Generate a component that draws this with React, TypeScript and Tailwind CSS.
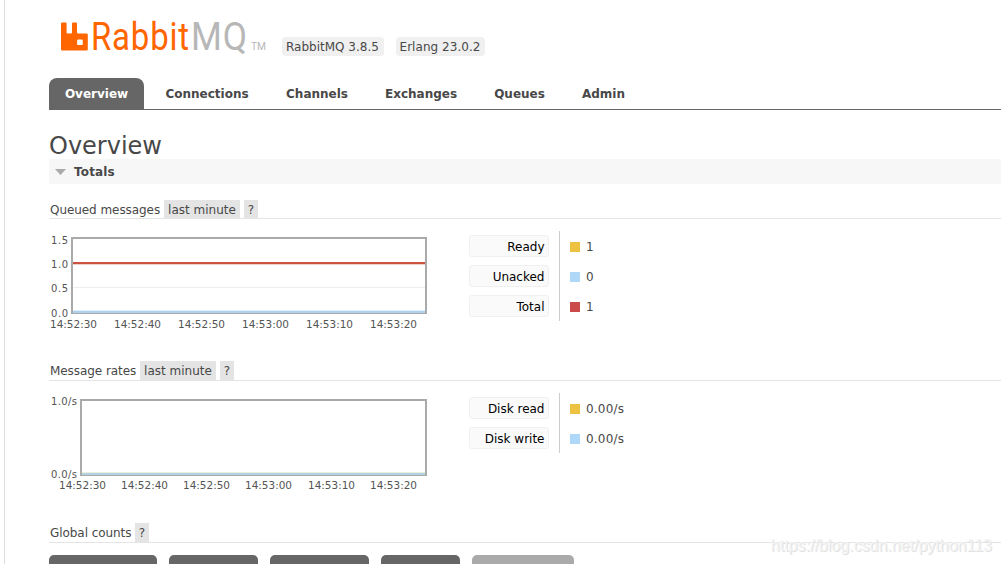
import type { ReactNode } from "react";

const tabs = [
	{ label: "Overview", width: "w-[95px]", active: true },
	{ label: "Connections", width: "w-[126px]" },
	{ label: "Channels", width: "w-[94px]" },
	{ label: "Exchanges", width: "w-[114px]" },
	{ label: "Queues", width: "w-[83px]" },
	{ label: "Admin", width: "w-[85px]" },
];

const counts = [
	"w-[108px] bg-[#666]",
	"w-[89px] bg-[#666]",
	"w-[99px] bg-[#666]",
	"w-[79px] bg-[#666]",
	"w-[102px] bg-[#aaa]",
];

function Logo() {
	return (
		<svg width="209" height="40" viewBox="0 0 209 40" className="shrink-0 overflow-visible">
			<path
				d="M2 6.500h3.600q1 0 1 1v9q0 1 1 1h3.400q1 0 1-1v-9q0-1 1-1h3q1 0 1 1v9q0 1 1 1h8.600q1.200 0 1.200 1.200v14.600q0 1.200-1.200 1.200H2.200Q1 34.500 1 33.300V7.500q0-1 1-1Zm16.300 17q-1.200 0-1.200 1.200v3.200q0 1.200 1.200 1.200h3.300q1.200 0 1.200-1.200v-3.200q0-1.200-1.200-1.200Z"
				fill="#f60"
				fillRule="evenodd"
			/>
			<g fontFamily="Roboto, sans-serif">
				<text x="31" y="34" fontSize="38.500" letterSpacing="1" fill="#f60" textLength="99" lengthAdjust="spacingAndGlyphs">
					Rabbit
				</text>
				<text x="131" y="34" fontSize="38.500" letterSpacing="1" fill="#b7b7b7" textLength="57" lengthAdjust="spacingAndGlyphs">
					MQ
				</text>
				<text x="191" y="34" fontSize="10" fill="#b7b7b7" textLength="15" lengthAdjust="spacingAndGlyphs">
					TM
				</text>
			</g>
		</svg>
	);
}

type SectionTitleProps = {
	title: string;
	range?: string;
	className: string;
	titleWidth: string;
	tagHeight?: string;
};

function SectionTitle({ title, range, className, titleWidth, tagHeight = "h-[19px]" }: SectionTitleProps) {
	return (
		<h3 className={`flex items-end border-b border-[#e4e4e4] ${className}`}>
			<span className={`h-[18px] pl-px leading-[19px] tracking-[-0.06px] whitespace-nowrap ${titleWidth}`}>{title}</span>
			{range && (
				<span className={`mr-1 w-[76px] bg-[#e4e4e4] text-center leading-[20px] whitespace-nowrap ${tagHeight}`}>
					{range}
				</span>
			)}
			<span className={`w-[14px] bg-[#e4e4e4] text-center leading-[20px] ${tagHeight}`}>?</span>
		</h3>
	);
}

function Legend({ items, className }: { items: { label: string; value: string; color: string }[]; className: string }) {
	return (
		<div className={`flex ${className}`}>
			<div className="flex w-[91px] flex-col gap-2 border-r border-[#ccc] py-1">
				{items.map((item) => (
					<button
						key={item.label}
						className="h-[22px] w-20 rounded-[3px] border border-[#f0f0f0] bg-[#fafafa] pt-px pr-[3.500px] text-right leading-5 text-black"
					>
						{item.label}
					</button>
				))}
			</div>
			<div className="flex flex-col pl-[10px]">
				{items.map((item) => (
					<div key={item.label} className="flex h-[30px] items-center pt-px">
						<span className={`mr-[6px] size-[10px] ${item.color}`} />
						<span className="pt-px tracking-[0.2px]">{item.value}</span>
					</div>
				))}
			</div>
		</div>
	);
}

function Chart({ children, times, left, labelY }: { children: ReactNode; times: number[]; left: number; labelY: number }) {
	const labels = ["14:52:30", "14:52:40", "14:52:50", "14:53:00", "14:53:10", "14:53:20"];
	return (
		<svg width="384" height="100" className="shrink-0" fontSize="10" fill="#545454">
			<rect x={left + 1} y="7" width={376 - left} height="75" fill="none" stroke="#aaa" strokeWidth="2" />
			{children}
			{labels.map((label, i) => (
				<text key={label} x={times[i]} y={labelY} textLength="47" lengthAdjust="spacingAndGlyphs">
					{label}
				</text>
			))}
		</svg>
	);
}

export default function App() {
	return (
		<div className="h-[564px] w-[1001px] overflow-hidden bg-white pl-1 font-['Verdana','DejaVu_Sans',sans-serif] text-[12px] text-[#484848]">
			<div className="relative h-full border-l border-[#ddd] pl-11">
				<header className="flex h-[78px] items-start pt-4 pl-[11px]">
					<Logo />
					<div className="mt-[21px] ml-[13px] flex gap-3">
						<span className="h-[19px] w-[102px] rounded-[4px] bg-[#f0f0f0] pl-1 leading-[20px] whitespace-nowrap">
							RabbitMQ 3.8.5
						</span>
						<span className="h-[19px] w-[89px] rounded-[4px] bg-[#f0f0f0] pl-[3.500px] leading-[20px] tracking-[0.05px] whitespace-nowrap">
							Erlang 23.0.2
						</span>
					</div>
				</header>

				<nav className="flex h-8 border-b border-[#666] font-bold">
					{tabs.map((tab) => (
						<a
							key={tab.label}
							className={`${tab.width} h-[31px] text-center leading-[32px] ${tab.active ? "rounded-t-lg bg-[#666] text-white" : ""}`}
						>
							{tab.label}
						</a>
					))}
				</nav>

				<h1 className="mt-[21px] h-7 text-[24px] leading-[30px]">Overview</h1>
				<h2 className="flex h-[25px] items-center bg-[#f7f7f7] pl-[6px] font-bold">
					<svg width="12" height="6" className="mr-[7px]">
						<path d="M0 0h11L5.500 6Z" fill="#aaa" />
					</svg>
					<span className="tracking-[0.15px]">Totals</span>
				</h2>

				<SectionTitle
					title="Queued messages"
					range="last minute"
					className="h-[35px]"
					titleWidth="w-[115px] leading-[20px]"
					tagHeight="h-[18px]"
				/>
				<div className="flex h-[126px] pt-3">
					<Chart left={22} times={[1, 65, 129, 193, 257, 321]} labelY={97}>
						<g>
							<text x="2" y="13" textLength="17">1.5</text>
							<text x="2" y="37" textLength="17">1.0</text>
							<text x="2" y="61" textLength="17">0.5</text>
							<text x="2" y="86" textLength="17">0.0</text>
							<path d="M24 56.500h352" stroke="#eee" />
							<path d="M24 33.500h352" stroke="#f4cfc6" />
							<path d="M24 32h352" stroke="#cc5340" strokeWidth="2" />
							<path d="M24 79.500h352" stroke="#e1f1fc" />
							<path d="M24 81h352" stroke="#aed2ee" strokeWidth="2" />
						</g>
					</Chart>
					<Legend
						className="ml-9 h-[90px]"
						items={[
							{ label: "Ready", value: "1", color: "bg-[#edc240]" },
							{ label: "Unacked", value: "0", color: "bg-[#afd8f8]" },
							{ label: "Total", value: "1", color: "bg-[#cb4b4b]" },
						]}
					/>
				</div>

				<SectionTitle title="Message rates" range="last minute" className="h-9" titleWidth="w-[91px]" />
				<div className="flex h-[126px] pt-3">
					<Chart left={31} times={[10, 72, 134, 196, 259, 321]} labelY={96}>
						<g>
							<text x="2" y="12" textLength="26">1.0/s</text>
							<text x="2" y="85" textLength="26">0.0/s</text>
							<path d="M33 79.500h343" stroke="#eaf0d8" />
							<path d="M33 81h343" stroke="#b2d3e6" strokeWidth="2" />
						</g>
					</Chart>
					<Legend
						className="ml-9 h-[60px]"
						items={[
							{ label: "Disk read", value: "0.00/s", color: "bg-[#edc240]" },
							{ label: "Disk write", value: "0.00/s", color: "bg-[#afd8f8]" },
						]}
					/>
				</div>

				<SectionTitle title="Global counts" className="h-9" titleWidth="w-[86px]" />
				<div className="mt-3 flex gap-3">
					{counts.map((count) => (
						<div key={count} className={`h-8 rounded-[5px] ${count}`} />
					))}
				</div>

				<span className="absolute top-[537px] right-[9px] font-['Liberation_Sans',sans-serif] text-[16px] leading-[18px] text-[#f3f3f3] [text-shadow:1px_1px_0_#e2e2e2]">
					https://blog.csdn.net/python113
				</span>
			</div>
		</div>
	);
}
